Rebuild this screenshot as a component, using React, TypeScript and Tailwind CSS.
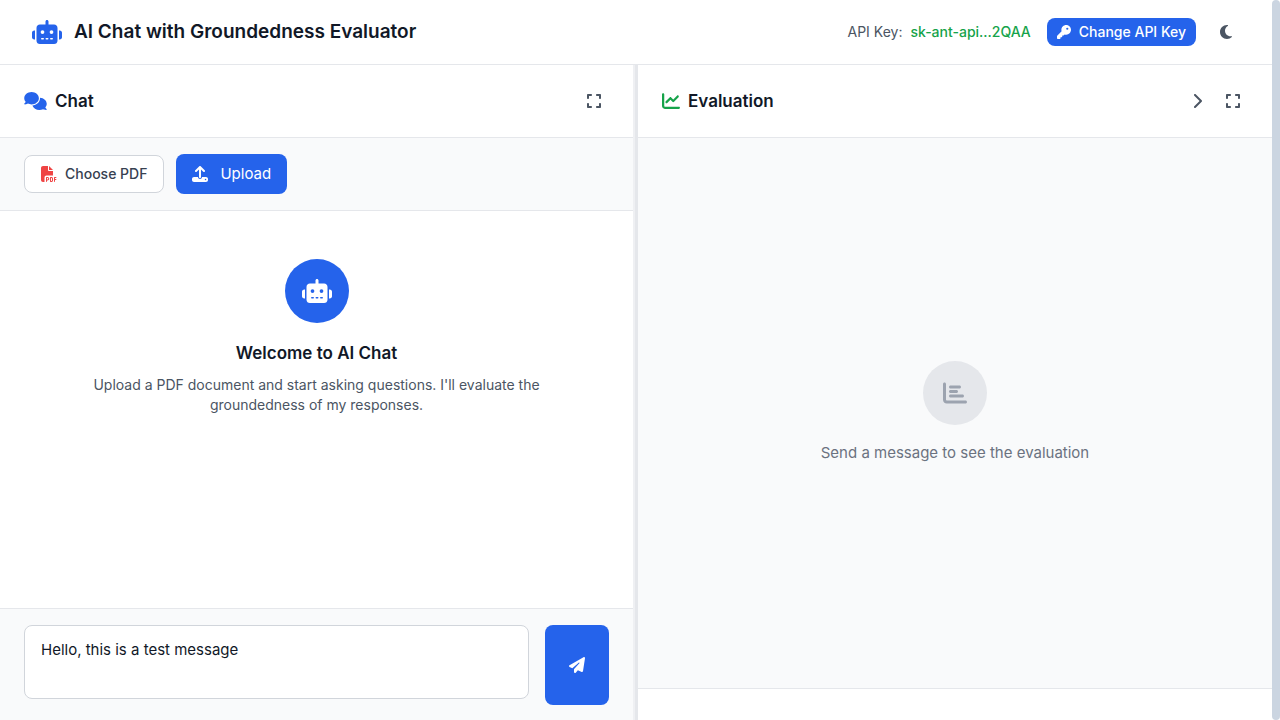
import { useState } from "react";
import {
  FaRobot,
  FaComments,
  FaFilePdf,
  FaUpload,
  FaKey,
  FaMoon,
  FaChartLine,
  FaChartBar,
  FaChevronRight,
  FaExpand,
  FaPaperPlane,
} from "react-icons/fa6";

function Header() {
  return (
    <header className="flex h-[65px] shrink-0 items-center justify-between border-b border-[#e5e7eb] bg-white px-8">
      <div className="flex items-center gap-3">
        <FaRobot className="h-6 w-[30px] text-[#2563eb]" />
        <h1 className="text-[19px] leading-8 font-semibold text-[#111827]">AI Chat with Groundedness Evaluator</h1>
      </div>
      <div className="flex items-center gap-4">
        <div className="flex items-center gap-2 text-sm">
          <span className="text-[#4b5563]">API Key:</span>
          <span className="font-medium text-[#16a34a]">sk-ant-api...2QAA</span>
        </div>
        <button type="button" className="flex items-center gap-2 rounded-lg bg-[#2563eb] px-2.5 py-1 text-sm font-medium text-white">
          <FaKey className="size-3.5" />
          Change API Key
        </button>
        <button type="button" aria-label="Dark mode" className="p-2 text-[#4b5563]">
          <FaMoon className="h-4 w-3" />
        </button>
      </div>
    </header>
  );
}

function ChatPanel() {
  const [message, setMessage] = useState("Hello, this is a test message");
  return (
    <section className="flex min-w-0 flex-col border-r border-[#eff0f3] bg-white">
      <div className="flex h-[73px] shrink-0 items-center justify-between border-b border-[#e5e7eb] px-6">
        <h2 className="flex items-center gap-2 text-[17px] leading-7 font-semibold text-[#111827]">
          <FaComments className="h-[18px] w-[23px] text-[#2563eb]" />
          Chat
        </h2>
        <button type="button" aria-label="Expand chat" className="p-2 text-[#4b5563]">
          <FaExpand className="h-4 w-3.5" />
        </button>
      </div>
      <div className="flex h-[73px] shrink-0 items-center gap-3 border-b border-[#e5e7eb] bg-[#f9fafb] px-6">
        <button type="button" className="flex items-center gap-2 rounded-lg border border-[#d1d5db] bg-white px-4 py-2 text-sm font-medium text-[#374151]">
          <FaFilePdf className="size-4 text-[#ef4444]" />
          Choose PDF
        </button>
        <button type="button" className="flex items-center gap-3 rounded-lg bg-[#2563eb] px-4 py-2 text-[15px] leading-6 text-white">
          <FaUpload className="size-4" />
          Upload
        </button>
      </div>
      <div className="flex flex-1 flex-col items-center overflow-hidden px-6 pt-12 text-center">
        <div className="flex size-16 items-center justify-center rounded-full bg-[#2563eb] text-white">
          <FaRobot className="h-6 w-[30px]" />
        </div>
        <h3 className="mt-4 text-[17px] leading-7 font-semibold text-[#111827]">Welcome to AI Chat</h3>
        <p className="mt-2 max-w-md text-sm text-[#4b5563]">
          Upload a PDF document and start asking questions. I'll evaluate the groundedness of my responses.
        </p>
      </div>
      <form className="flex shrink-0 gap-4 border-t border-[#e5e7eb] bg-[#f9fafb] px-6 py-4" onSubmit={(e) => e.preventDefault()}>
        <div className="min-w-0 flex-1">
          <textarea
            aria-label="Message"
            rows={2}
            value={message}
            onChange={(e) => setMessage(e.target.value)}
            className="block w-full resize-none rounded-lg border border-[#d1d5db] bg-white px-4 py-3 text-[15px] leading-6 text-[#111827]"
          />
        </div>
        <button type="submit" aria-label="Send" className="flex h-20 w-16 shrink-0 items-center justify-center rounded-lg bg-[#2563eb] text-white">
          <FaPaperPlane className="size-4" />
        </button>
      </form>
    </section>
  );
}

function EvaluationPanel() {
  return (
    <section className="flex min-w-0 flex-col bg-white">
      <div className="flex h-[73px] shrink-0 items-center justify-between border-b border-[#e5e7eb] px-6">
        <h2 className="flex items-center gap-2 text-[17px] leading-7 font-semibold text-[#111827]">
          <FaChartLine className="size-[18px] text-[#16a34a]" />
          Evaluation
        </h2>
        <div className="flex items-center gap-2 text-[#4b5563]">
          <button type="button" aria-label="Collapse evaluation" className="p-2">
            <FaChevronRight className="h-4 w-2.5" />
          </button>
          <button type="button" aria-label="Expand evaluation" className="p-2">
            <FaExpand className="h-4 w-3.5" />
          </button>
        </div>
      </div>
      <div className="flex flex-1 flex-col items-center justify-center bg-[#f9fafb] text-center">
        <div className="flex size-16 items-center justify-center rounded-full bg-[#e5e7eb] text-[#9ca3af]">
          <FaChartBar className="size-6" />
        </div>
        <p className="mt-4 text-[15px] leading-6 text-[#6b7280]">Send a message to see the evaluation</p>
      </div>
      <footer className="h-[33px] shrink-0 border-t border-[#e5e7eb] bg-white" />
    </section>
  );
}

export default function App() {
  return (
    <div className="flex h-screen overflow-hidden bg-white font-['Inter',sans-serif]">
      <div className="flex min-w-0 flex-1 flex-col">
        <Header />
        <main className="grid h-[calc(100vh-64px)] shrink-0 grid-cols-[1fr_4px_1fr]">
          <ChatPanel />
          <div className="border-l border-[#eff0f3] bg-[#e5e7eb]" />
          <EvaluationPanel />
        </main>
      </div>
      <div className="w-2 shrink-0 rounded bg-[#cbd5e1]" />
    </div>
  );
}
